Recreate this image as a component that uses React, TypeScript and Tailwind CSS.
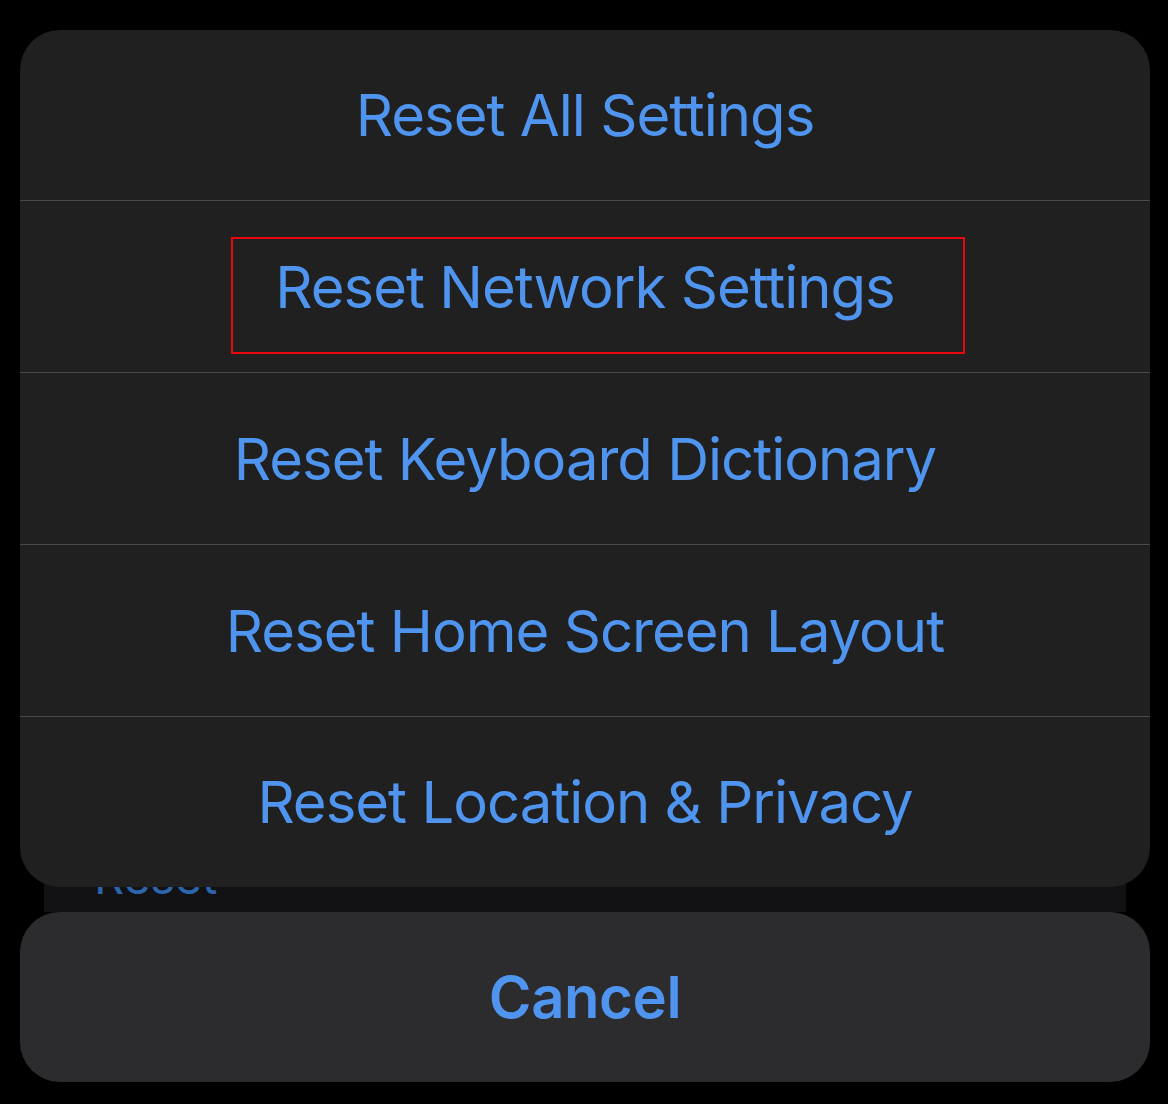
import React from 'react';

const items = [
  'Reset All Settings',
  'Reset Network Settings',
  'Reset Keyboard Dictionary',
  'Reset Home Screen Layout',
  'Reset Location & Privacy',
];

export default function App() {
  return (
    <div
      className="relative w-[1168px] h-[1104px] bg-black overflow-hidden"
      style={{ fontFamily: 'Inter, "Noto Sans", "Liberation Sans", sans-serif' }}
    >
      {/* settings page dimmed behind the sheet */}
      <div className="absolute left-[44px] top-[820px] w-[1082px] h-[92px] bg-[#121214]">
        <span className="absolute left-[50px] top-[33px] text-[47px] leading-none text-[#2c65ad] tracking-[-0.3px]">
          Reset
        </span>
      </div>

      {/* action sheet */}
      <div className="relative flex flex-col gap-[25px] pl-[20px] pr-[18px] pt-[30px]">
        <div className="flex flex-col h-[857px] rounded-[40px] bg-[#202020] overflow-hidden">
          {items.map((label, i) => (
            <div
              key={label}
              className={
                i === 0
                  ? 'relative h-[171px] shrink-0 flex items-center justify-center border-b border-[#4a4a4b]'
                  : i < items.length - 1
                    ? 'relative h-[172px] shrink-0 flex items-center justify-center border-b border-[#4a4a4b]'
                    : 'relative flex-1 flex items-center justify-center'
              }
            >
              <span className="text-[58px] leading-none text-[#4f95ef] tracking-[-1px]">{label}</span>
              {i === 1 && (
                <div className="absolute left-[211px] top-[36px] w-[734px] h-[117px] border-2 border-[#e8080d]" />
              )}
            </div>
          ))}
        </div>

        <div className="h-[170px] rounded-[40px] bg-[#2c2c2e] flex items-center justify-center">
          <span className="text-[58px] leading-none font-semibold text-[#4f95ef] tracking-[-0.4px]">Cancel</span>
        </div>
      </div>
    </div>
  );
}
